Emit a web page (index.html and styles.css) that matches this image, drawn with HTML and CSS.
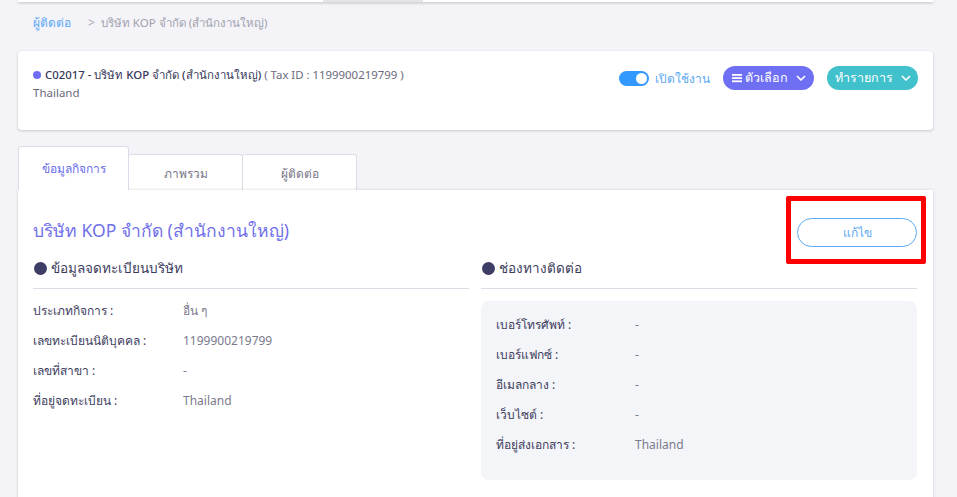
FILE: index.html
```html
<!DOCTYPE html>
<html lang="th">
<head>
<meta charset="utf-8">
<title>บริษัท KOP จำกัด</title>
<link rel="stylesheet" href="styles.css">
</head>
<body>
<div class="page">
  <div class="topstrip"><span class="topstrip-seg"></span></div>

  <div class="breadcrumb">
    <a class="crumb-link">ผู้ติดต่อ</a>
    <span class="crumb-sep">&gt;</span>
    <span class="crumb-current">บริษัท KOP จำกัด (สำนักงานใหญ่)</span>
  </div>

  <div class="header-card">
    <div class="header-info">
      <div class="header-title"><span class="status-dot"></span><span class="company-code">C02017 - บริษัท KOP จำกัด (สำนักงานใหญ่)</span><span class="tax-id"> ( Tax ID : 1199900219799 )</span></div>
      <div class="header-country">Thailand</div>
    </div>
    <div class="header-actions">
      <div class="toggle-wrap">
        <span class="toggle"><span class="toggle-knob"></span></span>
        <span class="toggle-label">เปิดใช้งาน</span>
      </div>
      <button class="pill pill-purple">
        <svg class="ico-menu" width="10" height="10" viewBox="0 0 10 10"><rect x="0" y="1" width="10" height="1.8" fill="#fff"/><rect x="0" y="4.2" width="10" height="1.8" fill="#fff"/><rect x="0" y="7.4" width="10" height="1.8" fill="#fff"/></svg>
        <span>ตัวเลือก</span>
        <svg class="ico-chev" width="10" height="7" viewBox="0 0 10 7"><path d="M1.5 1.5 L5 5 L8.5 1.5" fill="none" stroke="#fff" stroke-width="1.7" stroke-linecap="round" stroke-linejoin="round"/></svg>
      </button>
      <button class="pill pill-teal">
        <span>ทำรายการ</span>
        <svg class="ico-chev" width="10" height="7" viewBox="0 0 10 7"><path d="M1.5 1.5 L5 5 L8.5 1.5" fill="none" stroke="#fff" stroke-width="1.7" stroke-linecap="round" stroke-linejoin="round"/></svg>
      </button>
    </div>
  </div>

  <div class="tabs">
    <div class="tab tab-active">ข้อมูลกิจการ</div>
    <div class="tab">ภาพรวม</div>
    <div class="tab">ผู้ติดต่อ</div>
  </div>

  <div class="main-card">
    <div class="annotation"></div>
    <div class="title-row">
      <h1 class="company-title">บริษัท KOP จำกัด (สำนักงานใหญ่)</h1>
      <button class="edit-btn">แก้ไข</button>
    </div>

    <div class="sections">
      <section class="section">
        <h2 class="section-head"><span class="head-dot"></span>ข้อมูลจดทะเบียนบริษัท</h2>
        <div class="rows rows-left">
          <div class="row"><span class="label">ประเภทกิจการ :</span><span class="value">อื่น ๆ</span></div>
          <div class="row"><span class="label">เลขทะเบียนนิติบุคคล :</span><span class="value">1199900219799</span></div>
          <div class="row"><span class="label">เลขที่สาขา :</span><span class="value">-</span></div>
          <div class="row"><span class="label">ที่อยู่จดทะเบียน :</span><span class="value">Thailand</span></div>
        </div>
      </section>
      <section class="section">
        <h2 class="section-head"><span class="head-dot"></span>ช่องทางติดต่อ</h2>
        <div class="rows rows-box">
          <div class="row"><span class="label">เบอร์โทรศัพท์ :</span><span class="value">-</span></div>
          <div class="row"><span class="label">เบอร์แฟกซ์ :</span><span class="value">-</span></div>
          <div class="row"><span class="label">อีเมลกลาง :</span><span class="value">-</span></div>
          <div class="row"><span class="label">เว็บไซต์ :</span><span class="value">-</span></div>
          <div class="row"><span class="label">ที่อยู่ส่งเอกสาร :</span><span class="value">Thailand</span></div>
        </div>
      </section>
    </div>
  </div>
</div>
</body>
</html>
```

FILE: styles.css
```css
* { box-sizing: border-box; }
html, body { margin: 0; padding: 0; }
body {
  background: #f3f3f8;
  font-family: "Noto Sans", "Open Sans", sans-serif;
  color: #3b3b5c;
  font-size: 12px;
  overflow: hidden;
}
.page {
  width: 957px;
  height: 497px;
  padding: 0 24px 0 18px;
}
.topstrip {
  height: 2px;
  background: #fff;
  box-shadow: 0 1px 3px rgba(0,0,0,0.25);
  position: relative;
}
.topstrip-seg {
  display: block;
  margin-left: 305px;
  width: 100px;
  height: 2px;
  background: #e4e4e8;
}
.breadcrumb {
  padding: 13px 0 0 15px;
  height: 49px;
  line-height: 16px;
  font-size: 12px;
  display: flex;
}
.crumb-link { color: #5ea9f3; }
.crumb-sep { color: #a8a8b4; margin: 0 6px 0 17px; }
.crumb-current { color: #a2a2ae; font-size: 11.5px; }

.header-card {
  background: #fff;
  border-radius: 4px;
  box-shadow: 0 1px 3px rgba(0,0,0,0.18);
  height: 79px;
  padding: 15px 15px 0 15px;
  display: flex;
  justify-content: space-between;
  align-items: flex-start;
}
.header-title {
  display: flex;
  align-items: center;
  line-height: 18px;
  font-size: 11.4px;
}
.status-dot {
  width: 8px; height: 8px;
  border-radius: 50%;
  background: #6e6ef2;
  margin-right: 4px;
}
.company-code { color: #37375a; font-weight: 500; }
.tax-id { color: #6a6a7c; white-space: pre; }
.header-country { color: #6a6a7c; line-height: 18px; font-size: 11.5px; }

.header-actions {
  display: flex;
  align-items: center;
  gap: 13px;
}
.toggle-wrap { display: flex; align-items: center; gap: 6px; }
.toggle {
  width: 30px; height: 15px;
  border-radius: 8px;
  background: #3399ff;
  position: relative;
  display: block;
}
.toggle-knob {
  position: absolute;
  right: 2px; top: 2px;
  width: 11px; height: 11px;
  border-radius: 50%;
  background: #fff;
}
.toggle-label { color: #5aa7f2; font-size: 12px; }
.pill {
  border: none;
  height: 24px;
  width: 91px;
  border-radius: 12px;
  color: #fff;
  font-family: inherit;
  font-size: 12.5px;
  display: flex;
  align-items: center;
  justify-content: center;
  gap: 5px;
  padding: 0;
}
.pill-purple { background: #6f6ff3; }
.pill-teal { background: #40c1cc; }
.ico-menu { margin-right: -2px; }
.ico-chev { margin-left: 3px; }

.tabs {
  margin-top: 16px;
  display: flex;
  align-items: flex-end;
  height: 44px;
}
.tab {
  height: 36px;
  width: 114px;
  background: #fff;
  border: 1px solid #dcdce8;
  border-bottom: none;
  border-left: none;
  border-radius: 3px 3px 0 0;
  color: #77778a;
  font-size: 12px;
  display: flex;
  align-items: center;
  justify-content: center;
  padding-top: 1px;
}
.tab-active {
  height: 44px;
  width: 111px;
  border-left: 1px solid #dcdce8;
  color: #6c6cec;
  padding-top: 0;
  padding-bottom: 0;
  position: relative;
  z-index: 1;
}
.main-card {
  background: #fff;
  height: 320px;
  position: relative;
  box-shadow: 0 0 3px rgba(0,0,0,0.15);
  padding: 28px 16px 0 15px;
}
.annotation {
  position: absolute;
  left: 768px;
  top: 6px;
  width: 140px;
  height: 68px;
  border: 5px solid #ff0000;
  border-radius: 2px;
}
.title-row {
  display: flex;
  justify-content: space-between;
  align-items: center;
  height: 29px;
}
.company-title {
  margin: -5px 0 0 0;
  font-size: 17.5px;
  font-weight: 400;
  color: #7070ea;
  line-height: 26px;
}
.edit-btn {
  width: 120px;
  height: 29px;
  border-radius: 15px;
  border: 1px solid #5ea9f3;
  background: #fff;
  color: #5ea9f3;
  font-family: inherit;
  font-size: 12px;
  padding: 0;
}
.sections {
  margin-top: 8px;
  display: grid;
  grid-template-columns: 436px 436px;
  column-gap: 12px;
  align-items: start;
}
.section-head {
  margin: 0;
  font-size: 13.5px;
  font-weight: 400;
  color: #3b3b5c;
  line-height: 26px;
  padding-bottom: 7px;
  border-bottom: 1px solid #dcdce6;
  display: flex;
  align-items: center;
}
.head-dot {
  width: 13px; height: 13px;
  border-radius: 50%;
  background: #3d3d66;
  margin: 0 4px 0 1px;
}
.rows-left { margin-top: 6px; }
.rows-box {
  margin-top: 12px;
  background: #f4f5f8;
  border-radius: 8px;
  padding: 8px 15px 21px 15px;
}
.row {
  display: flex;
  height: 30px;
  align-items: center;
}
.label { color: #3e3e5e; }
.rows-left .label { width: 150px; }
.rows-box .label { width: 139px; }
.value { color: #7a7a8c; }
```
